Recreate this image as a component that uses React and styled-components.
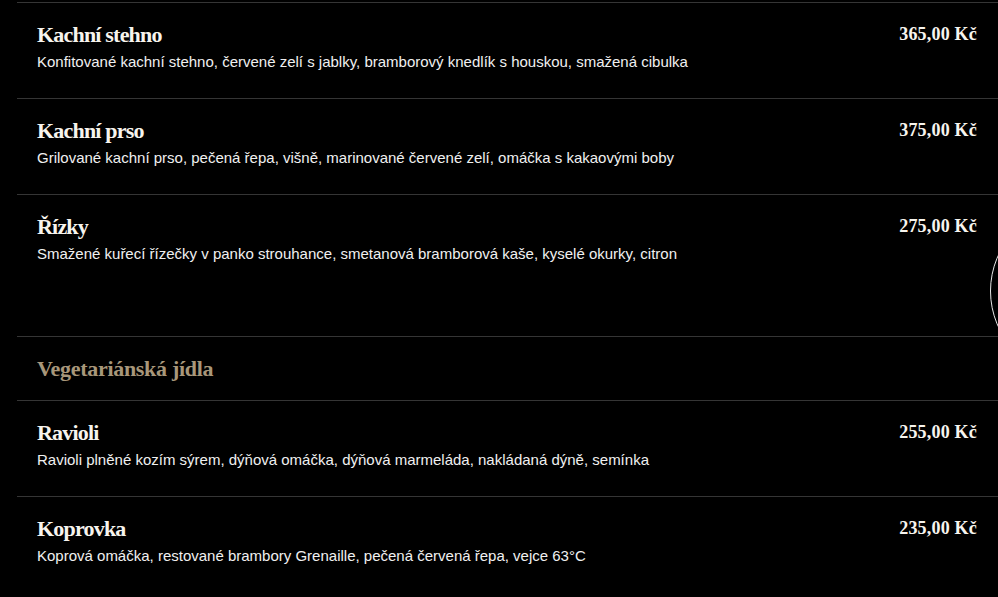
import React from 'react';
import styled, { createGlobalStyle } from 'styled-components';

const GlobalStyle = createGlobalStyle`
	html, body {
		margin: 0;
		padding: 0;
		background: #000;
	}
	body {
		overflow: hidden;
	}
`;

const Page = styled.div`
	position: relative;
	width: 998px;
	height: 597px;
	overflow: hidden;
	background: #000;
	padding: 2px 0 0 17px;
	box-sizing: border-box;
`;

const Menu = styled.div`
	display: flex;
	flex-direction: column;
`;

const Row = styled.div`
	display: flex;
	justify-content: space-between;
	align-items: flex-start;
	border-top: 1px solid #353535;
	padding: 19px 21px 0 20px;
	box-sizing: content-box;
	height: ${props => (props.last ? '122px' : '76px')};
`;

const Info = styled.div`
	display: flex;
	flex-direction: column;
`;

const Title = styled.h3`
	margin: 0;
	font-family: 'Liberation Serif', 'DejaVu Serif', serif;
	font-weight: 700;
	font-size: 22px;
	line-height: 26px;
	letter-spacing: -0.8px;
	color: #f7f4ee;
`;

const Description = styled.p`
	margin: 4px 0 0;
	font-family: 'Liberation Sans', Arial, sans-serif;
	font-size: 15px;
	line-height: 20px;
	color: #f0f0f0;
`;

const Price = styled.span`
	font-family: 'Liberation Serif', 'DejaVu Serif', serif;
	font-weight: 700;
	font-size: 18px;
	line-height: 24px;
	letter-spacing: 0.2px;
	color: #f7f4ee;
	white-space: nowrap;
`;

const Category = styled.h2`
	margin: 0;
	border-top: 1px solid #353535;
	display: flex;
	align-items: center;
	padding: 0 20px;
	font-family: 'Liberation Serif', 'DejaVu Serif', serif;
	font-weight: 700;
	font-size: 22px;
	letter-spacing: -0.3px;
	color: #a8977a;
	box-sizing: border-box;
	height: 64px;
`;

const ScrollRing = styled.div`
	position: absolute;
	left: 990px;
	top: 205px;
	width: 170px;
	height: 170px;
	border: 1.5px solid #e6e6e6;
	border-radius: 50%;
`;

const mains = [
	{
		title: 'Kachní stehno',
		text: 'Konfitované kachní stehno, červené zelí s jablky, bramborový knedlík s houskou, smažená cibulka',
		price: '365,00 Kč'
	},
	{
		title: 'Kachní prso',
		text: 'Grilované kachní prso, pečená řepa, višně, marinované červené zelí, omáčka s kakaovými boby',
		price: '375,00 Kč'
	},
	{
		title: 'Řízky',
		text: 'Smažené kuřecí řízečky v panko strouhance, smetanová bramborová kaše, kyselé okurky, citron',
		price: '275,00 Kč'
	}
];

const vegetarian = [
	{
		title: 'Ravioli',
		text: 'Ravioli plněné kozím sýrem, dýňová omáčka, dýňová marmeláda, nakládaná dýně, semínka',
		price: '255,00 Kč'
	},
	{
		title: 'Koprovka',
		text: 'Koprová omáčka, restované brambory Grenaille, pečená červená řepa, vejce 63°C',
		price: '235,00 Kč'
	}
];

const Dish = ({ dish, last }) => (
	<Row last={last}>
		<Info>
			<Title>{dish.title}</Title>
			<Description>{dish.text}</Description>
		</Info>
		<Price>{dish.price}</Price>
	</Row>
);

export default function App() {
	return (
		<Page>
			<GlobalStyle />
			<Menu>
				{mains.map((dish, i) => (
					<Dish key={dish.title} dish={dish} last={i === mains.length - 1} />
				))}
				<Category>Vegetariánská jídla</Category>
				{vegetarian.map(dish => (
					<Dish key={dish.title} dish={dish} />
				))}
			</Menu>
			<ScrollRing />
		</Page>
	);
}
